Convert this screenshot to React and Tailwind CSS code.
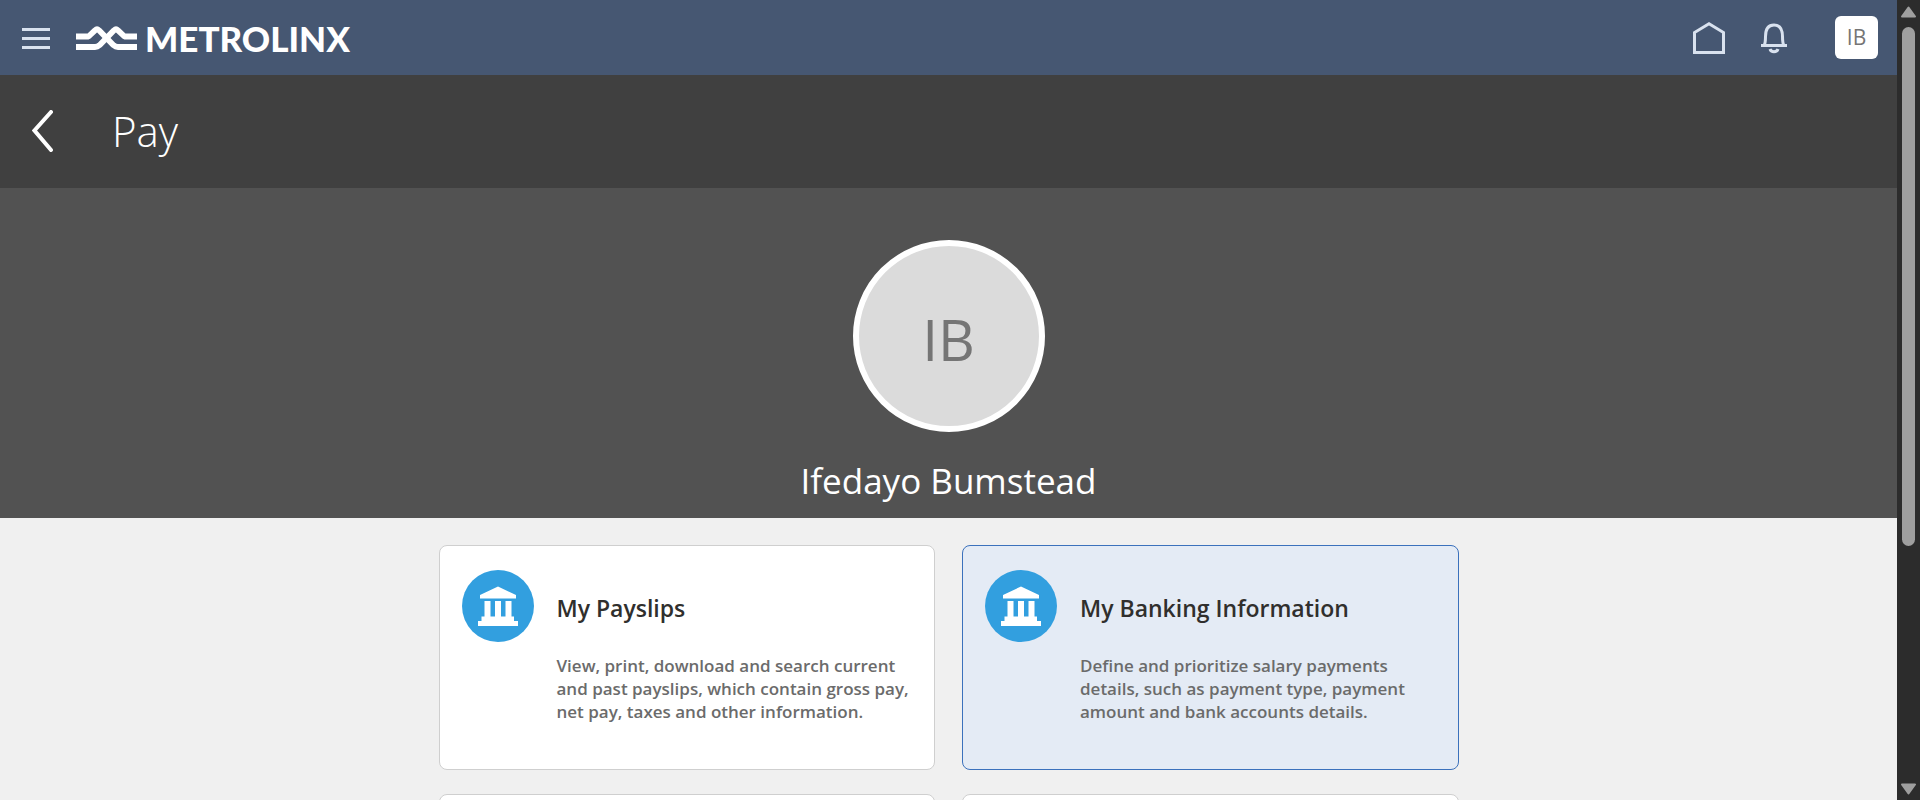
import React from "react";

const cards = [
  {
    title: "My Payslips",
    text: "View, print, download and search current and past payslips, which contain gross pay, net pay, taxes and other information.",
  },
  {
    title: "My Banking Information",
    text: "Define and prioritize salary payments details, such as payment type, payment amount and bank accounts details.",
    selected: true,
  },
];

function Logo() {
  return (
    <a href="#home" aria-label="Metrolinx" className="ml-[26px] flex items-center gap-2 text-white">
      <svg width="61" height="28" viewBox="0 0 61 28" fill="none" stroke="currentColor" strokeWidth="5.8" strokeLinejoin="round" aria-hidden="true">
        <path d="M0 12.500H12.500L19 6.300Q21 4.500 23 6.300L37.500 21.200Q39.500 23 42 23H61" />
        <path d="M61 12.500H48.500L42 6.300Q40 4.500 38 6.300L23.500 21.200Q21.500 23 19 23H0" />
      </svg>
      <span className="font-['Lato'] text-[35px] leading-[40px] font-black">METROLINX</span>
    </a>
  );
}

function BankIcon() {
  return (
    <svg className="size-[72px] shrink-0" viewBox="0 0 72 72" aria-hidden="true">
      <circle cx="36" cy="36" r="36" fill="#329fdf" />
      <path
        fill="#fff"
        d="M36 16.500 54 25v3.500H18V25zM22.500 31h6v15.500h4.500V31h6v15.500h4.500V31h6v15.500H52V51h4v5H16v-5h3.500v-4.500h3z"
      />
    </svg>
  );
}

function Card({ title, text, selected }) {
  return (
    <a
      href="#card"
      className={
        "flex min-h-[225px] gap-[23px] rounded-[8px] border px-[22px] pt-6 pb-10 " +
        (selected ? "border-[#3b71bc] bg-[#e4ebf5]" : "border-[#cfcfcf] bg-white")
      }
    >
      <BankIcon />
      <div className="min-w-0">
        <h3 className="mt-[22px] text-[23px] leading-[32px] font-semibold text-[#302f2d]">{title}</h3>
        <p className="mt-[30px] text-[17px] leading-[23px] font-semibold text-[#6b6b6b]">{text}</p>
      </div>
    </a>
  );
}

export default function App() {
  return (
    <div className="flex h-screen overflow-hidden bg-[#f0f0f0] font-['Open_Sans','Noto_Sans',sans-serif]">
      <div className="flex min-w-0 flex-1 flex-col overflow-hidden">
        <header className="flex h-[75px] shrink-0 items-center bg-[#465772] pr-[19px] pl-[22px] text-[#d9e2ef]">
          <button aria-label="Menu">
            <svg width="28" height="24" viewBox="0 0 28 24" stroke="currentColor" strokeWidth="3" aria-hidden="true">
              <path d="M0 3.500h28M0 12.500h28M0 21.500h28" />
            </svg>
          </button>
          <Logo />
          <div className="ml-auto flex items-center">
            <button aria-label="Home">
              <svg width="32" height="34" viewBox="0 0 32 34" fill="none" stroke="currentColor" strokeWidth="3" aria-hidden="true">
                <path d="M1.500 31.500v-20L16 2.800l14.500 8.700v20z" />
              </svg>
            </button>
            <button aria-label="Notifications" className="ml-9">
              <svg width="26" height="32" viewBox="0 0 26 32" fill="none" stroke="currentColor" strokeWidth="3" aria-hidden="true">
                <path d="M0 23.500h26M3 23.500c1.300-2 1.500-5 1.500-9C4.500 7 7.500 3 13 3s8.500 4 8.500 11.500c0 4 .2 7 1.500 9M9 27c.6 2 2 2.700 4 2.700s3.400-.7 4-2.700" />
              </svg>
            </button>
            <button className="ml-12 flex size-[43px] items-center justify-center rounded-[6px] bg-white text-[21px] text-[#757575]">IB</button>
          </div>
        </header>

        <div className="flex h-[113px] shrink-0 items-center bg-[#404040] pb-[2px] pl-8 text-white">
          <button aria-label="Back">
            <svg width="22" height="42" viewBox="0 0 22 42" fill="none" stroke="currentColor" strokeWidth="4" strokeLinecap="round" aria-hidden="true">
              <path d="M19 2 2.500 20.500 19 40" />
            </svg>
          </button>
          <h1 className="ml-[58px] text-[42px] leading-[56px] font-light">Pay</h1>
        </div>

        <section className="flex h-[330px] shrink-0 flex-col items-center bg-[#525252] pt-[52px]">
          <div className="flex size-[192px] items-center justify-center rounded-full border-[6px] border-white bg-[#dbdbdb] pt-[6px] text-[57px] leading-[64px] text-[#757575]">
            IB
          </div>
          <h2 className="mt-6 text-[35px] leading-[50px] text-white">Ifedayo Bumstead</h2>
        </section>

        <main className="mx-auto grid w-full max-w-[1020px] shrink-0 grid-cols-2 gap-x-[27px] gap-y-6 pt-[27px]">
          {cards.map((card) => (
            <Card key={card.title} {...card} />
          ))}
          <div className="min-h-[225px] rounded-[8px] border border-[#cfcfcf] bg-white" />
          <div className="min-h-[225px] rounded-[8px] border border-[#cfcfcf] bg-white" />
        </main>
      </div>

      <div className="flex w-[23px] shrink-0 flex-col items-center bg-[#2c2c2c] pt-[6px] pb-[5px] text-[#9f9f9f]" aria-hidden="true">
        <svg width="15" height="12" viewBox="0 0 15 12" fill="currentColor" stroke="currentColor" strokeWidth="2" strokeLinejoin="round">
          <path d="M7.500 1.500 14 10.500H1z" />
        </svg>
        <div className="mt-[9px] mb-[237px] w-[13px] flex-1 rounded-full bg-[#9f9f9f]" />
        <svg width="15" height="12" viewBox="0 0 15 12" fill="currentColor" stroke="currentColor" strokeWidth="2" strokeLinejoin="round">
          <path d="M7.500 10.500 14 1.500H1z" />
        </svg>
      </div>
    </div>
  );
}
